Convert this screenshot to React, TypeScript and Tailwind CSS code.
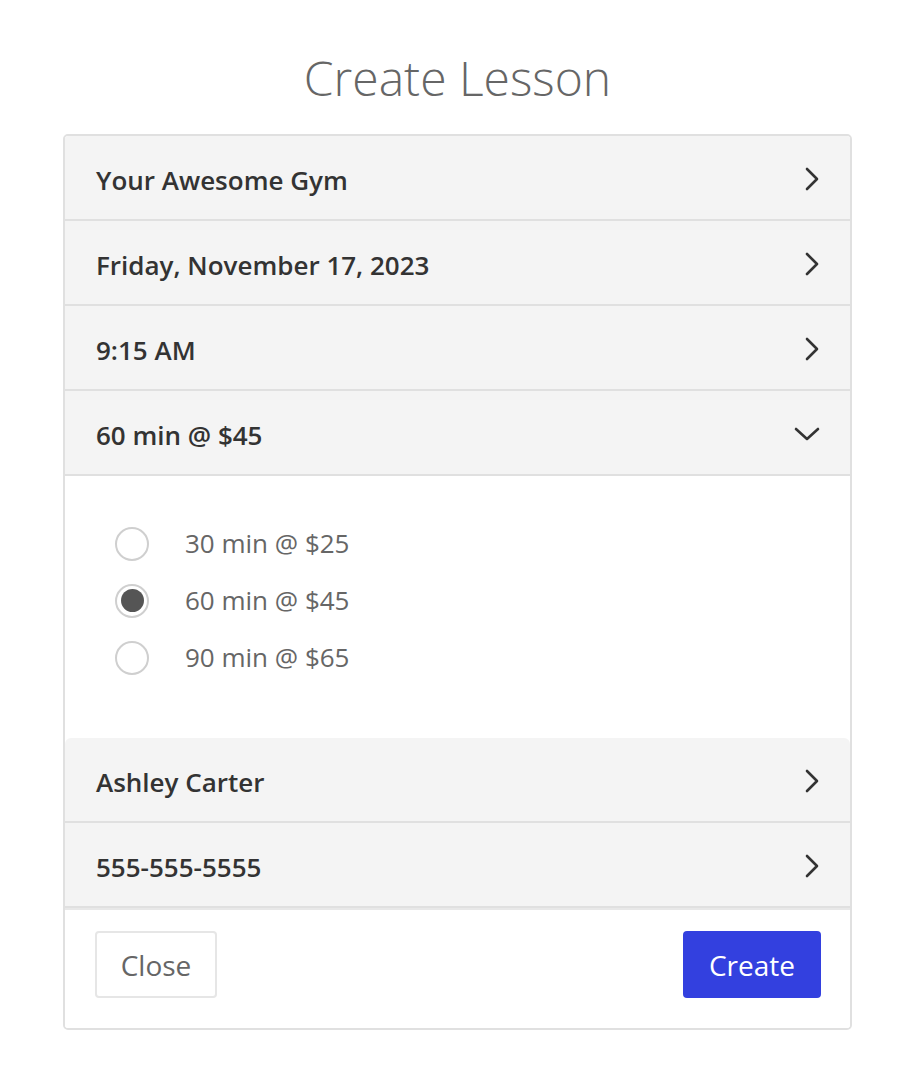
import React from "react";

const ChevronRight = () => (
  <svg width="16" height="24" viewBox="0 0 16 24" fill="none">
    <path d="M3 2 L13 12 L3 22" stroke="#333" strokeWidth="2.6" strokeLinecap="round" strokeLinejoin="round" />
  </svg>
);

const ChevronDown = () => (
  <svg width="26" height="18" viewBox="0 0 26 18" fill="none">
    <path d="M2 4 L13 14 L24 4" stroke="#333" strokeWidth="2.6" strokeLinecap="round" strokeLinejoin="round" />
  </svg>
);

function Row({ label, open, rounded }: { label: string; open?: boolean; rounded?: boolean }) {
  return (
    <div
      className={`flex items-center justify-between h-[85px] pl-[31px] pr-[30px] bg-[#f4f4f4] border-b-2 border-[#e0e0e0] ${rounded ? "rounded-t-[6px]" : ""}`}
    >
      <span className="mt-[6px] text-[26px] font-semibold text-[#333]">{label}</span>
      <span className="mt-[2px]">{open ? <ChevronDown /> : <ChevronRight />}</span>
    </div>
  );
}

function Radio({ label, checked }: { label: string; checked?: boolean }) {
  return (
    <div className="flex items-center h-[57px]">
      <div className="w-[34px] h-[34px] rounded-full border-2 border-[#cfcfcf] flex items-center justify-center bg-white">
        {checked && <div className="w-[23px] h-[23px] rounded-full bg-[#555]" />}
      </div>
      <span className="ml-[36px] text-[26px] text-[#666]">{label}</span>
    </div>
  );
}

export default function App() {
  return (
    <div
      className="w-[910px] min-h-[1073px] bg-white flex flex-col items-center"
      style={{ fontFamily: '"Open Sans", "Noto Sans", Arial, sans-serif' }}
    >
      <h1 className="pt-[48px] text-[48px] leading-[60px] font-light text-[#666] mb-[26px] ml-[5px]">Create Lesson</h1>
      <div className="w-[789px] ml-[5px] border-2 border-[#e0e0e0] rounded-[5px] overflow-hidden">
        <Row label="Your Awesome Gym" />
        <Row label="Friday, November 17, 2023" />
        <Row label="9:15 AM" />
        <Row label="60 min @ $45" open />
        <div className="bg-white pt-[39px] pb-[52px] pl-[50px]">
          <Radio label="30 min @ $25" />
          <Radio label="60 min @ $45" checked />
          <Radio label="90 min @ $65" />
        </div>
        <Row label="Ashley Carter" rounded />
        <Row label="555-555-5555" />
        <div className="border-t-2 border-[#e8e8e8] bg-white flex items-start justify-between pt-[21px] pb-[30px] pl-[30px] pr-[29px]">
          <button className="h-[67px] w-[122px] border-2 border-[#e6e6e6] rounded-[4px] text-[28px] text-[#666] bg-white">
            Close
          </button>
          <button className="h-[67px] w-[138px] rounded-[4px] text-[28px] text-white bg-[#3340df]">
            Create
          </button>
        </div>
      </div>
    </div>
  );
}
